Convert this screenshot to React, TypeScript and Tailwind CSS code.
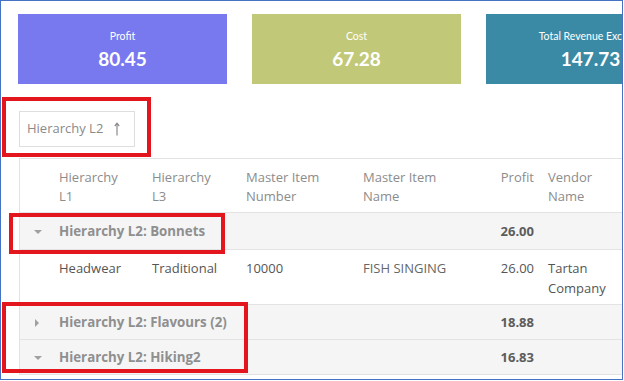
import React from 'react';

const cols = 'grid grid-cols-[31px_93px_94px_117px_116px_71px_1fr]';

function StatCard({ label, value, color }: { label: string; value: string; color: string }) {
  return (
    <div className={`w-[209px] h-[70px] shrink-0 flex flex-col items-center justify-center text-white ${color}`}>
      <div className="text-[10.5px] leading-[14px] whitespace-nowrap">{label}</div>
      <div className="text-[19px] font-bold leading-[22px] mt-[5px]">{value}</div>
    </div>
  );
}

function GroupRow({ title, profit, open, height }: { title: string; profit: string; open: boolean; height: string }) {
  return (
    <div className={`${cols} ${height} items-center pt-[2px] bg-[#f5f5f5] border-b border-[#e3e3e3]`}>
      <div className="pl-[14px] flex items-center">
        {open ? (
          <span className="w-0 h-0 border-x-[4px] border-x-transparent border-t-[4px] border-t-[#a0a0a0]" />
        ) : (
          <span className="ml-[1px] w-0 h-0 border-y-[4px] border-y-transparent border-l-[4px] border-l-[#a0a0a0]" />
        )}
      </div>
      <div className="col-span-4 px-2 font-bold text-[13.3px] text-[#8f8f8f] whitespace-nowrap">{title}</div>
      <div className="pr-2 text-right font-bold text-[#5c5c5c]">{profit}</div>
      <div />
    </div>
  );
}

export default function App() {
  return (
    <div className="relative w-[624px] h-[381px] bg-white overflow-hidden" style={{ fontFamily: '"Open Sans", sans-serif' }}>
      <div className="w-[623px] h-[380px] border border-[#4472c4] overflow-hidden pt-[13px] pl-[17px] text-[13px]">
        {/* KPI cards */}
        <div className="flex gap-[25px]" style={{ fontFamily: 'Lato, sans-serif' }}>
          <StatCard label="Profit" value="80.45" color="bg-[#7879ef]" />
          <StatCard label="Cost" value="67.28" color="bg-[#c1c979]" />
          <StatCard label="Total Revenue Excl Tax" value="147.73" color="bg-[#3b8aa5]" />
        </div>

        {/* Group-by chip */}
        <div className="mt-[27px] ml-[1px] w-[116px] h-[36px] border border-[#dedede] flex items-center pl-[7px] text-[#8a8a8a]">
          <span>Hierarchy L2</span>
          <svg className="ml-[11px]" width="6" height="14" viewBox="0 0 6 14" fill="none" stroke="#8a8a8a" strokeWidth="1.2">
            <path d="M3 1.5V13.5" />
            <path d="M0.8 4L3 1.3L5.2 4" />
          </svg>
        </div>

        {/* Grid */}
        <div className="mt-[11px] ml-[1px] border-l border-[#e3e3e3]">
          <div className={`${cols} h-[55px] pt-[9px] leading-[19px] border-y border-[#e3e3e3] text-[#8c8c8c]`}>
            <div />
            <div className="px-2">Hierarchy<br />L1</div>
            <div className="px-2">Hierarchy<br />L3</div>
            <div className="px-2">Master Item<br />Number</div>
            <div className="px-2">Master Item<br />Name</div>
            <div className="pr-2 text-right">Profit</div>
            <div className="pl-[6px]">Vendor<br />Name</div>
          </div>

          <GroupRow title="Hierarchy L2: Bonnets" profit="26.00" open height="h-[37px]" />

          <div className={`${cols} h-[55px] pt-[8px] leading-[20px] border-b border-[#e3e3e3] text-[#555]`}>
            <div />
            <div className="px-2">Headwear</div>
            <div className="px-2">Traditional</div>
            <div className="px-2">10000</div>
            <div className="px-2 text-[#666]">FISH SINGING</div>
            <div className="pr-2 text-right">26.00</div>
            <div className="pl-[6px]">Tartan<br />Company</div>
          </div>

          <GroupRow title="Hierarchy L2: Flavours (2)" profit="18.88" open={false} height="h-[35px]" />
          <GroupRow title="Hierarchy L2: Hiking2" profit="16.83" open height="h-[35px]" />
        </div>
      </div>

      {/* annotation boxes */}
      <div className="absolute left-[2px] top-[97px] w-[149px] h-[60px] border-[4px] border-[#e3161e]" />
      <div className="absolute left-[9px] top-[213px] w-[216px] h-[41px] border-[4px] border-[#e3161e]" />
      <div className="absolute left-[2px] top-[302px] w-[246px] h-[71px] border-[4px] border-[#e3161e]" />
    </div>
  );
}
